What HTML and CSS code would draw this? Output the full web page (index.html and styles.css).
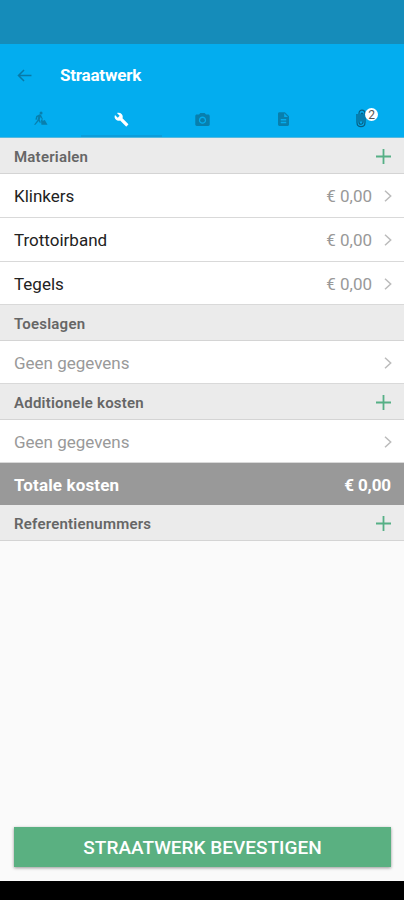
FILE: index.html
```html
<!DOCTYPE html>
<html lang="nl">
<head>
<meta charset="utf-8">
<title>Straatwerk</title>
<link rel="stylesheet" href="styles.css">
</head>
<body>
<div class="status-bar"></div>
<header class="app-header">
  <div class="title-bar">
    <svg class="back" viewBox="0 0 16 14"><path d="M15.5 7H1.5M7.5 1L1.5 7L7.5 13"/></svg>
    <h1>Straatwerk</h1>
  </div>
  <nav class="tabs">
    <div class="tab"><svg class="digger" viewBox="0 0 16 16"><circle cx="8.6" cy="2" r="1.6"/><path d="M7.2 3.4L3.5 5.2L2.5 9L4 9.3L4.7 6.6L5.7 6.1L4.500 10L1.100 14.700H2.600L6 10.700L7.500 13L8.300 12L7.200 9L8.100 6.500L9.400 8.600L8.500 10L9 14.700H15.500L12.600 9.700L10.600 10.500L9.800 9.700L10.500 8.400L8.600 4.200Z"/></svg></div>
    <div class="tab active"><svg class="wrench" viewBox="0 0 24 24"><path d="M22.7 19l-9.1-9.1c.9-2.3.4-5-1.5-6.9-2-2-5-2.4-7.4-1.3L9 6 6 9 1.6 4.7C.4 7.1.9 10.1 2.9 12.1c1.9 1.9 4.6 2.4 6.9 1.5l9.1 9.1c.4.4 1 .4 1.4 0l2.3-2.3c.5-.4.5-1.1.1-1.4z"/></svg></div>
    <div class="tab"><svg class="camera" viewBox="2 2 20 18"><circle cx="12" cy="12" r="3.2"/><path d="M9 2L7.17 4H4c-1.1 0-2 .9-2 2v12c0 1.1.9 2 2 2h16c1.1 0 2-.9 2-2V6c0-1.1-.9-2-2-2h-3.17L15 2H9zm3 15c-2.76 0-5-2.24-5-5s2.24-5 5-5 5 2.24 5 5-2.24 5-5 5z"/></svg></div>
    <div class="tab"><svg class="document" viewBox="4 2 16 20"><path d="M14 2H6c-1.1 0-1.99.9-1.99 2L4 20c0 1.1.89 2 1.99 2H18c1.1 0 2-.9 2-2V8l-6-6zm2 16H8v-2h8v2zm0-4H8v-2h8v2zm-3-5V3.5L18.500 9H13z"/></svg></div>
    <div class="tab attachment"><svg class="clip" viewBox="0 0 10 19"><path d="M1 5V13.500C1 19 9 19 9 13.500V4.500C9 0 3 0 3 4.500V13C3 16 7 16 7 13V5.500C7 3.700 5 3.700 5 5.500V12.500"/></svg><span class="badge">2</span></div>
  </nav>
</header>
<main>
  <section>
    <h2>Materialen<svg class="plus" viewBox="0 0 15 15"><path d="M7.500 0V15M0 7.500H15"/></svg></h2>
    <div class="row"><span>Klinkers</span><span class="amount">€ 0,00</span><svg class="chevron" viewBox="0 0 8 12"><path d="M1 .7L6.700 6L1 11.300"/></svg></div>
    <div class="row"><span>Trottoirband</span><span class="amount">€ 0,00</span><svg class="chevron" viewBox="0 0 8 12"><path d="M1 .7L6.700 6L1 11.300"/></svg></div>
    <div class="row last"><span>Tegels</span><span class="amount">€ 0,00</span><svg class="chevron" viewBox="0 0 8 12"><path d="M1 .7L6.700 6L1 11.300"/></svg></div>
  </section>
  <section>
    <h2>Toeslagen</h2>
    <div class="row empty"><span>Geen gegevens</span><svg class="chevron" viewBox="0 0 8 12"><path d="M1 .7L6.700 6L1 11.300"/></svg></div>
  </section>
  <section>
    <h2>Additionele kosten<svg class="plus" viewBox="0 0 15 15"><path d="M7.500 0V15M0 7.500H15"/></svg></h2>
    <div class="row empty"><span>Geen gegevens</span><svg class="chevron" viewBox="0 0 8 12"><path d="M1 .7L6.700 6L1 11.300"/></svg></div>
  </section>
  <div class="total"><span>Totale kosten</span><span class="sum">€ 0,00</span></div>
  <h2>Referentienummers<svg class="plus" viewBox="0 0 15 15"><path d="M7.500 0V15M0 7.500H15"/></svg></h2>
</main>
<footer><button>STRAATWERK BEVESTIGEN</button></footer>
<div class="system-nav"></div>
</body>
</html>
```

FILE: styles.css
```css
* { box-sizing: border-box; }
body {
  margin: 0;
  height: 900px;
  display: flex;
  flex-direction: column;
  overflow: hidden;
  background: #fafafa;
  font-family: Roboto, sans-serif;
  color: #222;
}
svg { display: block; flex: none; fill: none; }
.status-bar { height: 44px; background: #158cba; flex: none; }
.app-header { height: 94px; background: #03adef; flex: none; border-bottom: 1px solid #55b9df; }
.title-bar { height: 62px; display: flex; align-items: center; padding-left: 17px; }
.back { width: 15px; height: 13px; stroke: #087aa8; stroke-width: 1.6; }
h1 { margin: 0 0 1px 28px; font-size: 17px; font-weight: 700; letter-spacing: -.2px; color: #fff; }
.tabs { display: flex; height: 31px; }
.tab { flex: 1; display: flex; justify-content: center; padding-top: 6px; }
.active { border-bottom: 2px solid #0a9ddb; }
.tab svg { fill: #087fad; }
.tab .digger { width: 15px; height: 15px; margin-top: -1px; }
.tab .wrench { width: 15px; height: 15px; margin-left: 1px; fill: #fff; }
.tab .camera { width: 15px; height: 13px; margin: 1px 0 0 2px; }
.tab .document { width: 11px; height: 14px; margin-left: 1px; }
.attachment { position: relative; }
.tab .clip { width: 10px; height: 19px; margin: -3px 5px 0 0; fill: none; stroke: #075f83; stroke-width: 1.2; }
.badge {
  position: absolute;
  left: 42px;
  top: 2px;
  width: 13px;
  height: 13px;
  border-radius: 50%;
  background: #fff;
  color: #555;
  font-size: 12px;
  line-height: 15px;
  text-align: center;
}
h2 {
  margin: 0;
  height: 36px;
  padding: 2px 13px 0 14px;
  display: flex;
  align-items: center;
  justify-content: space-between;
  background: #ebebeb;
  border-bottom: 1px solid #d4d4d4;
  font-size: 15px;
  font-weight: 600;
  letter-spacing: .22px;
  color: #666;
}
.plus { width: 15px; height: 15px; stroke: #56b086; stroke-width: 1.8; }
.row {
  height: 44px;
  padding: 0 12px 0 14px;
  display: flex;
  align-items: center;
  background: #fff;
  border-bottom: 1px solid #d9d9d9;
  font-size: 17px;
}
.last, .empty { height: 43px; padding-top: 2px; }
.empty { color: #999; }
.amount { margin-left: auto; color: #999; }
.chevron { width: 8px; height: 12px; margin-left: 12px; stroke: #bbb; stroke-width: 1.5; }
.empty .chevron { margin-left: auto; }
.total {
  height: 42px;
  padding: 2px 13px 0 14px;
  display: flex;
  align-items: center;
  justify-content: space-between;
  background: #999;
  color: #fff;
  font-size: 17px;
  font-weight: 700;
}
.total span:first-child { letter-spacing: .15px; }
.sum { letter-spacing: -.1px; }
footer { margin-top: auto; padding: 0 13px 14px 14px; }
button {
  display: block;
  width: 100%;
  height: 40px;
  padding: 1px 0 0;
  border: 0;
  background: #5ab081;
  box-shadow: 0 1px 3px rgba(0, 0, 0, .4);
  font: 500 19px Roboto, sans-serif;
  color: #fff;
}
.system-nav { height: 19px; background: #000; flex: none; }
```
